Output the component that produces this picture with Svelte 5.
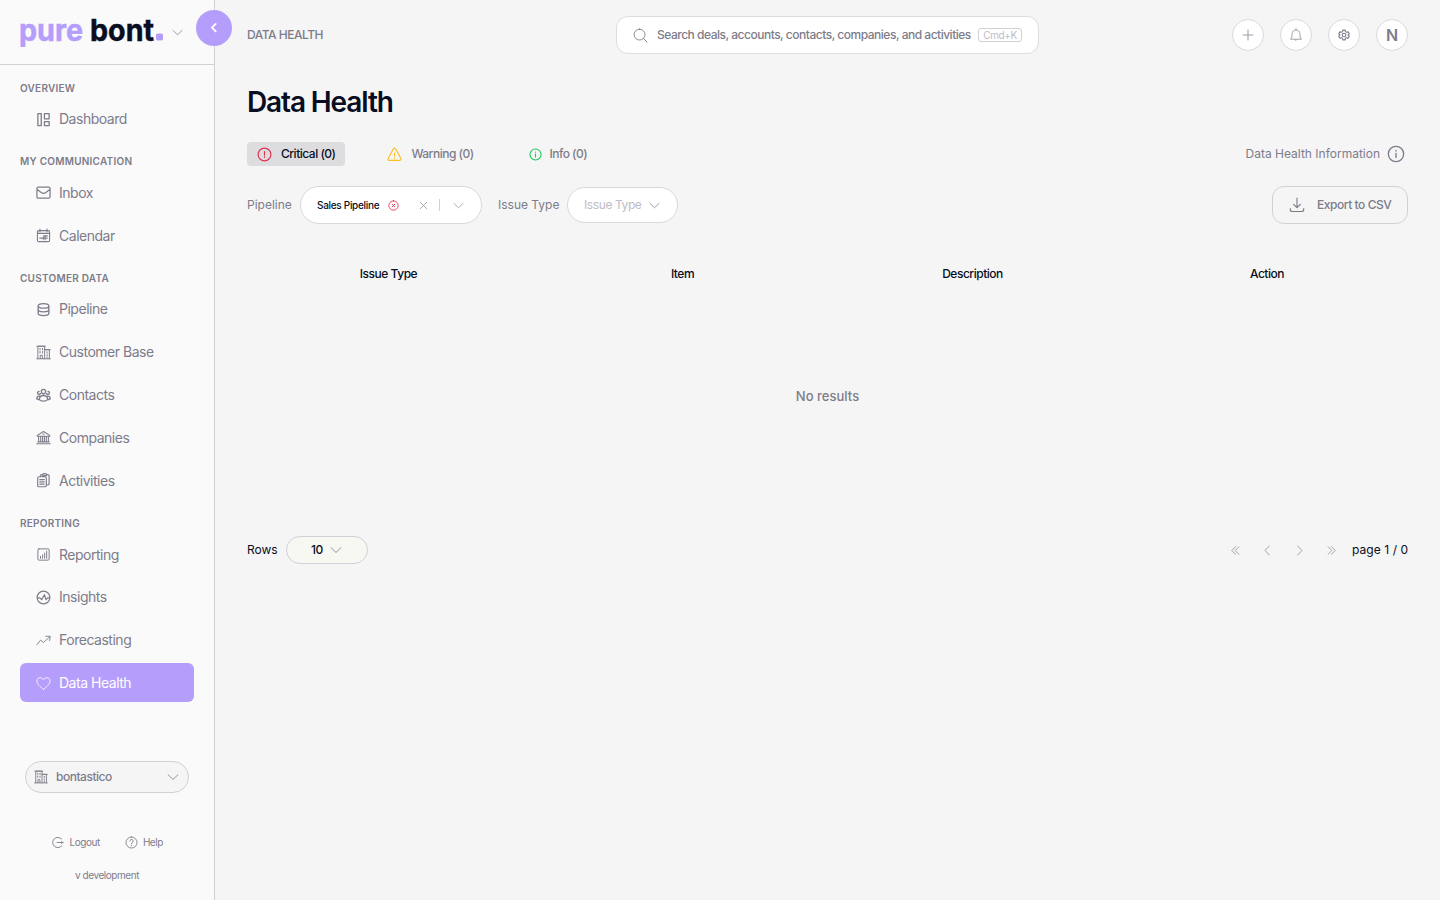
<script>
  const groups = [
    { title: 'OVERVIEW', items: [['dashboard', 'Dashboard']] },
    { title: 'MY COMMUNICATION', items: [['inbox', 'Inbox'], ['calendar', 'Calendar']] },
    {
      title: 'CUSTOMER DATA',
      items: [['pipeline', 'Pipeline'], ['building', 'Customer Base'], ['contacts', 'Contacts'], ['bank', 'Companies'], ['activities', 'Activities']]
    },
    {
      title: 'REPORTING',
      items: [['report', 'Reporting'], ['insights', 'Insights'], ['forecast', 'Forecasting'], ['heart', 'Data Health']]
    }
  ];
  const active = 'Data Health';

  // 16x16 stroke icons: [path data, stroke width]
  const icons = {
    dashboard: ['M2 1.800h3.600v12.700H2zM9 1.800h5v5.500H9zM9 10.300h5v4.200H9z', 1.4],
    inbox: ['M2.500 2.300h11q1.500 0 1.500 1.500v8.700q0 1.500-1.500 1.500h-11Q1 14 1 12.500V3.800Q1 2.300 2.500 2.300zM1.300 4.800 5.500 8q2.500 1.700 5 0l4.200-3.200', 1.3],
    calendar: ['M3 2.800h10q1.500 0 1.500 1.500v8.700q0 1.500-1.500 1.500H3q-1.500 0-1.500-1.500V4.300q0-1.500 1.500-1.500zM4.200 1v3M11.800 1v3M1.500 5.700h13M4 10.800h2M7 10.800h5M8.200 8.400h4M9.700 8v4.500M7.700 9.500v2.500', 1.15],
    pipeline: ['M2.300 4.200c0-1.500 2.500-2.400 5.700-2.400s5.700.9 5.700 2.400S11.200 6.600 8 6.600 2.300 5.700 2.300 4.200zM2.300 4.200v7.900c0 1.500 2.500 2.500 5.700 2.500s5.700-1 5.700-2.500V4.200M2.300 8c0 1.500 2.500 2.500 5.700 2.500s5.700-1 5.700-2.500', 1.45],
    building: ['M.8 14.700h14.400M2 14.700V1.300h7.200v13.400M1 1.300h9M9.200 5h5v9.700M9.200 5h6M4.300 3.700v1.500M6.900 3.700v1.500M4.300 7v1.500M6.900 7v1.500M4.500 14.500v-3.500h2.300v3.500M11.800 7.300v1.300M11.800 10.300v1.300M11.800 13v1', 1.05],
    contacts: ['M8 1.500a2.300 2.300 0 1 1 0 4.600a2.300 2.300 0 1 1 0-4.600zM3.200 3.700a1.600 1.600 0 1 0 0 3.200a1.600 1.600 0 0 0 1.500-.900M12.800 3.700a1.600 1.600 0 1 1 0 3.200a1.600 1.600 0 0 1-1.500-.900M3.600 12.300C3.600 9.800 5.400 8 8 8s4.400 1.800 4.400 4.300C11 14.600 5 14.600 3.600 12.300zM3.500 8.700C1.700 8.800.8 9.800.8 11.700l2 .8M12.500 8.700c1.800.1 2.700 1.100 2.700 3l-2 .8', 1.4],
    bank: ['M.8 14.600h14.400M2 12.700h12M1.300 5.700 8 1.600l6.700 4.100v1H1.300zM2.800 7v5.700M5 7v5.700M7 7v5.700M9 7v5.700M11 7v5.700M13.200 7v5.700M7.300 4.300h1.400', 1.15],
    activities: ['M3.300 4h6.200Q11 4 11 5.500v7.700q0 1.500-1.500 1.500H3.300q-1.500 0-1.500-1.500V5.500Q1.800 4 3.300 4zM4.800 3.800V3q0-1.200 1.200-1.200h1M11.200 1.800h1.300Q14 1.800 14 3.300v8q0 1.500-1.500 1.500H11M7.300 2.800V1.700q0-1 1-1h1.900q1 0 1 1v1.100zM4 7h4.800M4 9.400h4.800M4 11.800h4.800', 1.25],
    report: ['M3.300 2h9.400Q14 2 14 3.300v9.400q0 1.300-1.300 1.300H3.300Q2 14 2 12.700V3.300Q2 2 3.300 2zM4.800 12v-2M7 12V8.500M9.200 12V6.500M11.400 12V4.500', 1.05],
    insights: ['M8 1.200a6.800 6.800 0 1 1 0 13.600A6.800 6.800 0 1 1 8 1.200zM1.200 8.300h2.600L6 10.300l3-5.300 1.700 5.300 1.700-2h2.400', 1.3],
    forecast: ['M.8 12.600 5 7.500l2.800 2.700 6.800-6M10.500 3.500h4.700l-.7 4.500', 0.95],
    heart: ['M8 14.200C4.500 11.500 1 8.700 1 5.300 1 3 2.600 1.800 4.400 1.800 6 1.800 7.300 2.700 8 4c.7-1.300 2-2.200 3.600-2.200C13.400 1.800 15 3 15 5.300c0 3.400-3.500 6.200-7 8.900z', 0.9],
    logout: ['M13 3.700A6.300 6.300 0 1 0 13 12.300M7.500 8H15M13 6.700 14.500 8 13 9.300', 1.1],
    help: ['M8 1.200a6.800 6.800 0 1 1 0 13.600A6.800 6.800 0 1 1 8 1.200zM5.900 6.200C5.900 3.500 10.200 3.600 10.100 6.200 10.100 7.700 8 7.700 8 9.500M8 11.300v.7', 1.1],
    search: ['M7 1.200a5.800 5.800 0 1 1 0 11.600A5.800 5.800 0 1 1 7 1.200zM11.200 11.200 15 15', 0.95],
    plus: ['M8 1.500v13M1.500 8h13', 1.4],
    bell: ['M8 .8v1.500M2 12.500c1.300-1.300 1.500-3 1.500-6C3.500 4 5.500 2.300 8 2.300S12.500 4 12.500 6.500c0 3 .2 4.700 1.500 6zM7 13.500q1 2 2 0', 1.1],
    gear: ['M6.500 1.500h3l.5 2 1.500.9 2-.6L15 6.400l-1.500 1.600L15 9.600l-1.500 2.600-2-.6-1.500.9-.5 2h-3l-.5-2-1.500-.9-2 .6L1 9.600 2.500 8 1 6.400l1.500-2.600 2 .6L6 3.500zM8 5.600a2.400 2.400 0 1 1 0 4.800 2.400 2.400 0 1 1 0-4.800z', 1.5],
    alert: ['M8 1.200a6.800 6.800 0 1 1 0 13.600A6.800 6.800 0 1 1 8 1.200zM8 5v3.700M8 10.600v.5', 1.25],
    warning: ['M6.800 1.900q1.200-1.500 2.400 0l5.600 10.300q.7 1.900-1.200 2.100H2.400q-1.900-.2-1.200-2.100zM8 6.500v3.200M8 11.700v.5', 1.2],
    info: ['M8 1.200a6.800 6.800 0 1 1 0 13.600A6.800 6.800 0 1 1 8 1.200zM8 7.500v3.600M8 4.900v.4', 1.35],
    remove: ['M8 1.200a6.800 6.800 0 1 1 0 13.600A6.800 6.800 0 1 1 8 1.200zM6 6l4 4M10 6 6 10', 1.25],
    close: ['M2 2l12 12M14 2 2 14', 1.3],
    download: ['M8 1v9.500M4.600 7.300 8 10.700l3.400-3.400M1.300 11.500v1q0 2 2 2h9.400q2 0 2-2v-1', 1.1],
    down: ['M1.500 5 8 11.300 14.500 5', 1.1],
    left: ['M10.500 1.500 4.500 8l6 6.500', 1.2],
    right: ['M5.500 1.500 11.500 8l-6 6.500', 1.2],
    first: ['M8 2.500 2.500 8 8 13.500M13 2.500 7.500 8 13 13.500', 1.2],
    last: ['M8 2.500 13.500 8 8 13.500M3 2.500 8.500 8 3 13.500', 1.2]
  };
</script>

{#snippet icon(name, size = 16)}
  <svg class="icon" width={size} height={size} viewBox="0 0 16 16" stroke-width={icons[name][1]} aria-hidden="true"><path d={icons[name][0]} /></svg>
{/snippet}

<div class="app">
  <aside>
    <div class="brand">
      <svg width="144" height="48" viewBox="0 0 144 48">
        <text class="pure" x="-1" y="33" textLength="64" lengthAdjust="spacingAndGlyphs">pure</text>
        <text class="bont" x="70" y="33" textLength="64" lengthAdjust="spacingAndGlyphs">bont</text>
        <rect x="136" y="25.500" width="7" height="7" rx="1.800" fill="#b49dfb" />
      </svg>
      <span class="muted">{@render icon('down', 11)}</span>
    </div>
    <button class="toggle" aria-label="Collapse">
      <svg width="12" height="12" viewBox="0 0 12 12" fill="none" stroke="#fff" stroke-width="1.800"><path d="M8.200 1.300 4 5.600l4.200 4.300" /></svg>
    </button>
    <nav>
      {#each groups as g}
        <section>
          <h2>{g.title}</h2>
          {#each g.items as [ic, label]}
            <a class:active={label === active}>{@render icon(ic, 15)}<span>{label}</span></a>
          {/each}
        </section>
      {/each}
    </nav>
    <div class="foot">
      <div class="org">{@render icon('building', 14)}<span>bontastico</span>{@render icon('down', 12)}</div>
      <div class="links">
        <span>{@render icon('logout', 13)}Logout</span>
        <span>{@render icon('help', 13)}Help</span>
      </div>
      <div class="version">v development</div>
    </div>
  </aside>

  <main>
    <header>
      <span class="crumb">DATA HEALTH</span>
      <div class="search">{@render icon('search', 15)}<span>Search deals, accounts, contacts, companies, and activities</span><kbd>Cmd+K</kbd></div>
      <div class="actions">
        <button class="light" aria-label="Add">{@render icon('plus', 12)}</button>
        <button class="light" aria-label="Notifications">{@render icon('bell', 14)}</button>
        <button aria-label="Settings">{@render icon('gear', 12)}</button>
        <button class="avatar">N</button>
      </div>
    </header>

    <h1>Data Health</h1>

    <div class="tabs">
      <div class="tab current"><i class="red">{@render icon('alert', 15)}</i><span>Critical (0)</span></div>
      <div class="tab warn"><i class="yellow">{@render icon('warning', 15)}</i><span>Warning (0)</span></div>
      <div class="tab inf"><i class="green">{@render icon('info', 13)}</i><span>Info (0)</span></div>
      <div class="about"><span>Data Health Information</span>{@render icon('info', 18)}</div>
    </div>

    <div class="filters">
      <span class="label">Pipeline</span>
      <div class="select pipe">
        <b>Sales Pipeline</b>
        <i class="red">{@render icon('remove', 11)}</i>
        <i class="x">{@render icon('close', 9)}</i>
        <i class="bar"></i>
        {@render icon('down', 11)}
      </div>
      <span class="label second">Issue Type</span>
      <div class="select type"><span>Issue Type</span>{@render icon('down', 11)}</div>
      <button class="export">{@render icon('download', 16)}<span>Export to CSV</span></button>
    </div>

    <div class="thead"><span>Issue Type</span><span>Item</span><span>Description</span><span>Action</span></div>
    <div class="empty">No results</div>

    <div class="pager">
      <span class="rows">Rows</span>
      <div class="count"><span>10</span>{@render icon('down', 12)}</div>
      <div class="pages">
        {@render icon('first', 11)}
        {@render icon('left', 11)}
        {@render icon('right', 11)}
        {@render icon('last', 11)}
      </div>
      <span class="page">page 1 / 0</span>
    </div>
  </main>
</div>

<style>
  :global(body) { background: #f5f5f5; }
  * { box-sizing: border-box; }
  .app {
    display: flex;
    width: 1440px;
    height: 900px;
    overflow: hidden;
    font-family: Inter, "Liberation Sans", sans-serif;
    line-height: 16px;
    color: #7d7c8a;
    background: #f5f5f5;
  }
  button { font: inherit; padding: 0; margin: 0; color: inherit; }
  h1, h2 { margin: 0; }
  i { display: flex; font-style: normal; }
  .icon { display: block; flex: none; fill: none; stroke: currentColor; stroke-linecap: round; stroke-linejoin: round; }

  aside {
    position: relative;
    display: flex;
    flex-direction: column;
    width: 215px;
    flex: none;
    background: #fafafa;
    border-right: 1px solid #d1d0d6;
  }
  .brand {
    display: flex;
    align-items: center;
    height: 65px;
    padding-left: 20px;
    border-bottom: 1px solid #d1d0d6;
  }
  .brand svg { overflow: visible; }
  .brand svg text { font-size: 30px; font-weight: 700; stroke-width: 0.500px; }
  .pure { fill: #b49dfb; stroke: #b49dfb; }
  .bont { fill: #090d22; stroke: #090d22; }
  .muted { margin-left: 8px; }
  .toggle {
    position: absolute;
    left: 196px;
    top: 10px;
    width: 36px;
    height: 36px;
    display: grid;
    place-items: center;
    border: 0;
    border-radius: 50%;
    background: #b49dfb;
    z-index: 1;
  }
  nav { padding: 14.800px 20px 0; }
  section { margin-bottom: 14.700px; }
  h2 {
    height: 16px;
    margin-bottom: 4px;
    font-size: 10px;
    line-height: 16px;
    font-weight: 600;
    letter-spacing: 0.250px;
  }
  nav a {
    display: flex;
    align-items: center;
    gap: 8px;
    height: 38.900px;
    padding-left: 16px;
    border-radius: 6px;
    font-size: 14px;
    line-height: 18px;
    letter-spacing: -0.480px;
  }
  nav a + a { margin-top: 4px; }
  section:last-child h2 { margin-bottom: 4.300px; }
  section:last-child h2 + a + a { margin-top: 3.700px; }
  nav a.active { margin-top: 3.400px; padding-top: 1.200px; background: #b49dfb; color: #fff; }
  .foot { margin-top: auto; padding: 0 25px 16px; font-size: 10px; letter-spacing: -0.450px; }
  .org {
    display: flex;
    align-items: center;
    height: 32px;
    padding: 0 9px 0 8px;
    border: 1px solid #d1d0d6;
    border-radius: 16px;
    background: #f5f5f5;
    font-size: 12px;
    font-weight: 500;
    letter-spacing: -0.480px;
  }
  .org span { flex: 1; margin-left: 8px; }
  .links { display: flex; justify-content: center; gap: 25px; height: 16px; margin-top: 41px; }
  .links span { display: flex; align-items: center; gap: 5.500px; }
  .links span + span { gap: 5px; }
  .version { margin-top: 17px; line-height: 17px; text-align: center; }

  main { flex: 1; min-width: 0; padding: 0 32px; }
  header { display: grid; grid-template-columns: 1fr 423px 1fr; align-items: center; height: 70px; }
  .crumb { font-size: 12px; font-weight: 500; letter-spacing: -0.480px; }
  .search {
    display: flex;
    align-items: center;
    height: 38px;
    padding: 0 16px;
    border: 1px solid #dcdce1;
    border-radius: 12px;
    background: #fff;
    font-size: 12px;
    font-weight: 500;
    letter-spacing: -0.490px;
    white-space: nowrap;
  }
  .search span { flex: 1; margin-left: 9px; }
  kbd {
    height: 14px;
    padding: 0 4px;
    border: 1px solid #d1d0d6;
    border-radius: 3px;
    color: #bdbcc5;
    font: 10px/12px Inter, sans-serif;
    letter-spacing: -0.350px;
  }
  .actions { display: flex; justify-content: flex-end; gap: 16px; }
  .actions button {
    display: grid;
    place-items: center;
    width: 32px;
    height: 32px;
    border: 1px solid #d9d9dd;
    border-radius: 50%;
    background: #fff;
  }
  .actions .light { color: #9e9da8; }
  .actions .avatar { font-size: 16px; font-weight: 600; }
  h1 { margin-top: 14px; font-size: 28px; line-height: 36px; font-weight: 600; letter-spacing: -1.120px; color: #090d22; }
  .tabs { display: flex; align-items: center; margin-top: 22px; height: 24px; font-size: 12px; font-weight: 500; }
  .tab { display: flex; align-items: center; height: 24px; letter-spacing: -0.490px; white-space: nowrap; }
  .current { width: 98px; padding-left: 10px; gap: 9px; border-radius: 4px; background: #dddde0; color: #090d22; }
  .warn { width: 132px; margin-left: 42.400px; gap: 9px; }
  .inf { margin-left: 10px; gap: 7px; }
  .red { color: #e5304f; }
  .yellow { color: #fbbf24; }
  .green { color: #22c55e; }
  .about { display: flex; align-items: center; gap: 7px; margin-left: auto; padding-right: 3px; font-weight: 400; letter-spacing: 0; }
  .about .icon { stroke-width: 1.200; }
  .filters { display: flex; align-items: center; height: 38px; margin-top: 20px; font-size: 12px; }
  .label { width: 53px; letter-spacing: 0; white-space: nowrap; }
  .second { width: 69px; margin-left: 16px; }
  .select { display: flex; align-items: center; border: 1px solid #d9d9dd; border-radius: 19px; background: #fff; white-space: nowrap; }
  .pipe { width: 182px; height: 38px; padding-left: 16px; color: #8d8c98; }
  .pipe b { width: 71.400px; font-size: 10px; font-weight: 500; letter-spacing: -0.300px; color: #090d22; }
  .x { margin-left: 19.800px; }
  .bar { width: 1px; height: 12px; margin: 0 13.200px 0 10.800px; background: #d1d0d6; }
  .type { width: 111px; height: 36px; padding-left: 16px; }
  .type span { width: 65px; color: #bebdc5; letter-spacing: -0.400px; }
  .export {
    display: flex;
    align-items: center;
    width: 136px;
    height: 38px;
    margin-left: auto;
    padding-left: 16px;
    gap: 12px;
    border: 1px solid #d1d0d6;
    border-radius: 12px;
    background: transparent;
    font-size: 12px;
    font-weight: 500;
    letter-spacing: -0.450px;
    white-space: nowrap;
  }
  .thead {
    display: grid;
    grid-template-columns: 283px 305px 275px 314px;
    margin-top: 40px;
    line-height: 20px;
    font-size: 12px;
    font-weight: 500;
    letter-spacing: -0.480px;
    text-align: center;
    color: #090d22;
  }
  .empty { margin-top: 102px; line-height: 20px; font-size: 13px; font-weight: 500; letter-spacing: 0.030px; text-align: center; }
  .pager { display: flex; align-items: center; height: 28px; margin-top: 130px; font-size: 12px; color: #090d22; }
  .rows { width: 39px; letter-spacing: 0; }
  .count {
    display: flex;
    align-items: center;
    width: 82px;
    height: 28px;
    padding-left: 24px;
    border: 1px solid #d1d0d6;
    border-radius: 14px;
    background: #f7f8f1;
    font-weight: 500;
    letter-spacing: -0.400px;
  }
  .count span { width: 19.400px; }
  .count .icon { color: #7d7c8a; }
  .pages { display: flex; gap: 21px; margin-left: auto; color: #93929d; }
  .page { width: 56px; margin-left: 15px; letter-spacing: 0.080px; white-space: nowrap; }
</style>
